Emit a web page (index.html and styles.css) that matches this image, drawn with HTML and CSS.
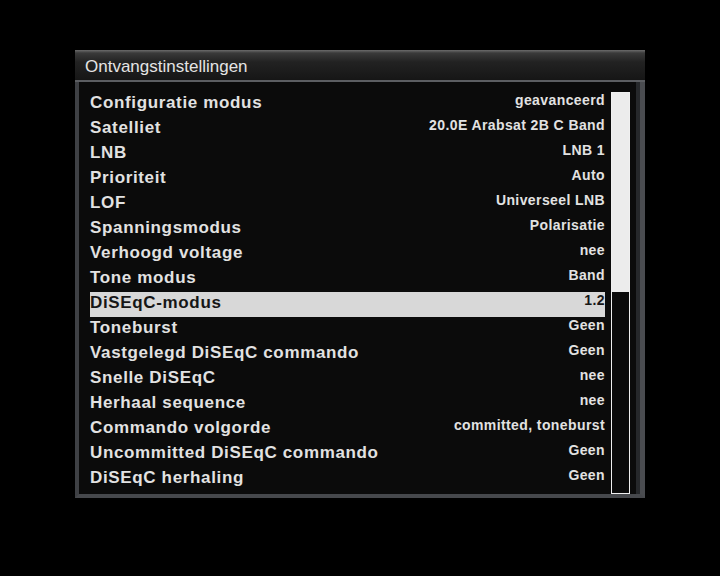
FILE: index.html
```html
<!DOCTYPE html>
<html lang="nl">
<head>
  <meta charset="UTF-8">
  <title>Ontvangstinstellingen</title>
  <link rel="stylesheet" href="styles.css">
</head>
<body>
  <div class="window">
    <div class="titlebar">Ontvangstinstellingen</div>
    <div class="frame">
      <div class="list">
        <div class="row"><span class="label">Configuratie modus</span><span class="value">geavanceerd</span></div>
        <div class="row"><span class="label">Satelliet</span><span class="value">20.0E Arabsat 2B C Band</span></div>
        <div class="row"><span class="label">LNB</span><span class="value">LNB 1</span></div>
        <div class="row"><span class="label">Prioriteit</span><span class="value">Auto</span></div>
        <div class="row"><span class="label">LOF</span><span class="value">Universeel LNB</span></div>
        <div class="row"><span class="label">Spanningsmodus</span><span class="value">Polarisatie</span></div>
        <div class="row"><span class="label">Verhoogd voltage</span><span class="value">nee</span></div>
        <div class="row"><span class="label">Tone modus</span><span class="value">Band</span></div>
        <div class="row selected"><span class="label">DiSEqC-modus</span><span class="value">1.2</span></div>
        <div class="row"><span class="label">Toneburst</span><span class="value">Geen</span></div>
        <div class="row"><span class="label">Vastgelegd DiSEqC commando</span><span class="value">Geen</span></div>
        <div class="row"><span class="label">Snelle DiSEqC</span><span class="value">nee</span></div>
        <div class="row"><span class="label">Herhaal sequence</span><span class="value">nee</span></div>
        <div class="row"><span class="label">Commando volgorde</span><span class="value">committed, toneburst</span></div>
        <div class="row"><span class="label">Uncommitted DiSEqC commando</span><span class="value">Geen</span></div>
        <div class="row"><span class="label">DiSEqC herhaling</span><span class="value">Geen</span></div>
      </div>
      <div class="scrollbar"><div class="thumb"></div></div>
    </div>
  </div>
</body>
</html>
```

FILE: styles.css
```css
html, body {
  margin: 0;
  padding: 0;
  background: #000;
}
body {
  width: 720px;
  height: 576px;
  padding: 50px 0 0 75px;
  box-sizing: border-box;
  font-family: "Liberation Sans", Arial, sans-serif;
  overflow: hidden;
}
.window {
  width: 570px;
}
.titlebar {
  height: 30px;
  line-height: 33px;
  padding-left: 10px;
  color: #e4e4e4;
  font-size: 17px;
  background: linear-gradient(#6c6c6c 0px, #3a3a3a 3px, #222 12px, #161616 30px);
  border-bottom: 2px solid #5c5e62;
}
.frame {
  display: flex;
  height: 402px;
  padding: 10px 0 0 11px;
  background: #0b0b0b;
  border-left: 4px solid #3e4044;
  border-bottom: 4px solid #46484c;
  border-right: 5px solid #4a4c50;
  box-shadow: inset -4px 0 0 #26282b;
}
.list {
  width: 515px;
}
.row {
  display: flex;
  justify-content: space-between;
  align-items: baseline;
  height: 25px;
  line-height: 25px;
  color: #e2e2e2;
}
.label {
  font-size: 17px;
  font-weight: bold;
  letter-spacing: 0.65px;
  position: relative;
  top: -2px;
}
.value {
  font-size: 14px;
  font-weight: bold;
  letter-spacing: 0.4px;
  position: relative;
  top: -5px;
}
.selected {
  background: #d8d8d8;
  color: #161616;
}
.scrollbar {
  width: 17px;
  height: 400px;
  margin-left: 6px;
  border: 1px solid #f0f0f0;
}
.thumb {
  height: 199px;
  background: #ececec;
}
```
